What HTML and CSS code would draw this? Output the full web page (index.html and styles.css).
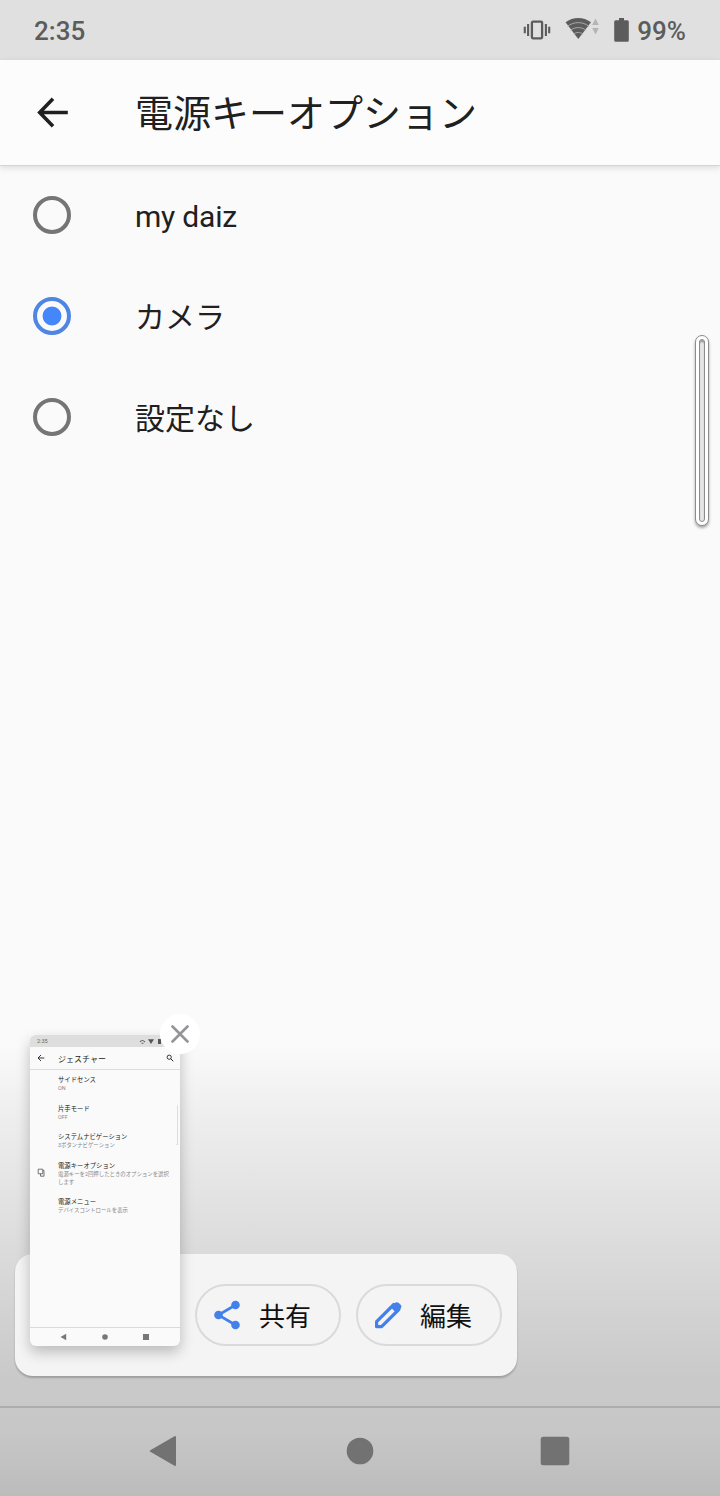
FILE: index.html
```html
<!DOCTYPE html>
<html lang="ja">
<head>
<meta charset="UTF-8">
<title>電源キーオプション</title>
<link rel="stylesheet" href="styles.css">
</head>
<body>

<div class="statusbar">
  <span class="clock">2:35</span>
  <div class="status-icons">
    <svg class="vibrate" width="28" height="22" viewBox="0 0 28 22">
      <rect x="8.9" y="2.7" width="10.2" height="16.6" rx="1" fill="none" stroke="currentColor" stroke-width="2.3"/>
      <path d="M5.1 5v12M22.9 5v12M1.8 7.8v6.4M26.2 7.8v6.4" stroke="currentColor" stroke-width="2.1"/>
    </svg>
    <svg class="wifi" width="36" height="24" viewBox="0 0 36 24">
      <path d="M0.5 5.3C8 -0.6 18.5 -0.6 26 5.3L13.3 22Z" fill="currentColor"/>
      <path d="M2.6 9.3C9 4.4 17.6 4.4 24 9.3M5.6 13.3C10.2 9.7 16.4 9.7 21 13.3M8.6 17.2C11.4 14.9 15.2 14.9 18 17.2" fill="none" stroke="#aaa" stroke-width="1"/>
      <path d="M27.2 8l3.3-6.5L33.8 8zM27.2 11h6.6l-3.3 6.5z" fill="#b4b4b4"/>
    </svg>
    <svg class="battery" width="15" height="24" viewBox="0 0 15 24">
      <path d="M5 0h5v2.2h3.3Q14.8 2.2 14.8 3.7v18.6q0 1.5-1.5 1.5H1.7Q.2 23.8.2 22.3V3.7q0-1.5 1.5-1.5H5z" fill="currentColor"/>
    </svg>
    <span class="percent">99%</span>
  </div>
</div>

<header class="appbar">
  <svg class="back" width="32" height="32" viewBox="0 0 32 32">
    <path d="M16 1.7L2.7 15.5l13.3 13.8M3 15.5h27.8" fill="none" stroke="currentColor" stroke-width="3.6"/>
  </svg>
  <h1>電源キーオプション</h1>
</header>

<main class="options">
  <div class="option"><span class="radio"></span><span class="label latin">my daiz</span></div>
  <div class="option"><span class="radio checked"></span><span class="label">カメラ</span></div>
  <div class="option"><span class="radio"></span><span class="label">設定なし</span></div>
</main>

<!-- edge sense bar -->
<div class="edge-bar"></div>

<!-- screenshot preview -->
<div class="shot">
  <div class="shot-actions">
    <div class="chip">
      <svg width="28" height="30" viewBox="0 0 28 30">
        <path d="M21.5 5L4.4 15l17.1 10" fill="none" stroke="currentColor" stroke-width="2.7"/>
        <circle cx="21.5" cy="5" r="4.3" fill="currentColor"/>
        <circle cx="4.5" cy="15" r="4.3" fill="currentColor"/>
        <circle cx="21.5" cy="25" r="4.3" fill="currentColor"/>
      </svg>
      <span>共有</span>
    </div>
    <div class="chip">
      <svg width="28" height="30" viewBox="0 0 28 30">
        <path d="M1.6 26.7v-5L18.8 4.5l5 5L6.6 26.7z" fill="none" stroke="currentColor" stroke-width="3.2" stroke-linejoin="round"/>
        <path d="M15.6 7.2l4-4q2.2-2 4.4 0l1.4 1.4q2 2.2 0 4.4l-4 4z" fill="currentColor"/>
      </svg>
      <span>編集</span>
    </div>
  </div>

  <div class="thumb">
    <div class="thumb-status">
      <span>2:35</span>
      <svg width="26" height="7" viewBox="0 0 26 7">
        <path d="M1 4q2-3 5 0M2.5 5.2h2" fill="none" stroke="#666" stroke-width="1.1"/>
        <path d="M9 1.2h6L12 6z" fill="#555"/>
        <path d="M19 1h3v5h-3z" fill="#555"/>
      </svg>
    </div>
    <div class="thumb-bar">
      <svg width="8" height="8" viewBox="0 0 8 8"><path d="M4 1L1 4l3 3M1 4h6.3" fill="none" stroke="#222" stroke-width=".9"/></svg>
      <span>ジェスチャー</span>
      <svg width="8" height="8" viewBox="0 0 8 8"><circle cx="3.2" cy="3.2" r="2.1" fill="none" stroke="#222" stroke-width=".9"/><path d="M4.8 4.8L7.3 7.3" stroke="#222" stroke-width="1"/></svg>
    </div>
    <div class="thumb-list">
      <div class="row"><b>サイドセンス</b><i>ON</i></div>
      <div class="row"><b>片手モード</b><i>OFF</i></div>
      <div class="row"><b>システムナビゲーション</b><i>3ボタンナビゲーション</i></div>
      <div class="row tall">
        <svg class="row-icon" width="8" height="10" viewBox="0 0 8 10"><path d="M1.2 1.2h4.6v4.6H1.2zM5.8 2.5H7v5.7H3.5V5.8" fill="none" stroke="#666" stroke-width=".9"/></svg>
        <b>電源キーオプション</b><i>電源キーを2回押したときのオプションを選択</i><i>します</i>
      </div>
      <div class="row"><b>電源メニュー</b><i>デバイスコントロールを表示</i></div>
    </div>
    <div class="thumb-nav">
      <svg width="7" height="8" viewBox="0 0 7 8"><path d="M.5 4L6.2.8v6.4z" fill="#777"/></svg>
      <svg width="6" height="6" viewBox="0 0 6 6"><circle cx="3" cy="3" r="2.8" fill="#777"/></svg>
      <svg width="6" height="6" viewBox="0 0 6 6"><path d="M0 0h6v6H0z" fill="#777"/></svg>
    </div>
    <div class="thumb-edge"></div>
  </div>

  <div class="close">
    <svg width="18" height="18" viewBox="0 0 18 18"><path d="M1.5 1.5l15 15M16.5 1.5l-15 15" stroke="#929497" stroke-width="2.6" stroke-linecap="round"/></svg>
  </div>
</div>

<nav class="navbar">
  <svg width="28" height="32" viewBox="0 0 28 32"><path d="M1.8 16L26 2v28z" fill="currentColor" stroke="currentColor" stroke-width="2" stroke-linejoin="round"/></svg>
  <svg width="28" height="28" viewBox="0 0 28 28"><circle cx="14" cy="14" r="13.3" fill="currentColor"/></svg>
  <svg width="30" height="30" viewBox="0 0 30 30"><rect x=".7" y=".7" width="28.6" height="28.6" rx="2.5" fill="currentColor"/></svg>
</nav>

</body>
</html>
```
FILE: styles.css
```css
* {
  box-sizing: border-box;
}
body {
  margin: 0;
  position: relative;
  height: 1496px;
  display: flex;
  flex-direction: column;
  overflow: hidden;
  font-family: Roboto, "Noto Sans CJK JP", sans-serif;
  color: #202020;
  background: linear-gradient(#fafafa 0, #fafafa 1045px, #efefef 1110px, #dedede 1230px, #c9c9c9 1380px, #c7c7c7 1430px, #bcbcbc 1496px);
}
svg {
  display: block;
  flex: none;
}

/* status bar */
.statusbar {
  height: 60px;
  padding: 2px 34px 0;
  display: flex;
  align-items: center;
  justify-content: space-between;
  background: #e0e0e0;
  color: #5c5c5c;
  font-size: 26px;
  font-weight: 500;
}
.status-icons {
  display: flex;
  align-items: center;
}
.vibrate {
  margin: -3px 14px 0 0;
}
.wifi {
  margin: -4px 13px 0 0;
}
.battery {
  margin: -3px 8px 0 0;
}

/* title */
.appbar {
  height: 106px;
  display: flex;
  align-items: center;
  padding-left: 37px;
  background: #fcfcfc;
  border-bottom: 1px solid #d4d4d4;
  box-shadow: 0 2px 6px rgba(0, 0, 0, 0.12);
}
.back {
  color: #202020;
}
h1 {
  margin: 3px 0 0 66px;
  font-size: 38px;
  line-height: 56px;
  font-weight: 400;
}

/* radio list */
.options {
  flex: 1;
}
.option {
  height: 101px;
  padding-left: 33px;
  display: flex;
  align-items: center;
  font-size: 30px;
}
.radio {
  width: 38px;
  height: 38px;
  margin: -4px 64px 0 0;
  border: 4px solid #757575;
  border-radius: 50%;
}
.radio.checked {
  border-color: #4f86e4;
  background: radial-gradient(circle, #4387fa 9px, transparent 9.8px);
}
.label {
  margin-top: -5px;
}
.label.latin {
  margin-top: -1px;
  letter-spacing: -0.2px;
}

.edge-bar {
  position: absolute;
  left: 695px;
  top: 335px;
  width: 14px;
  height: 191px;
  border: 1px solid #8c8c8c;
  border-radius: 7px;
  background: #fff;
  box-shadow: 0 2px 3px rgba(0, 0, 0, 0.35);
}
.edge-bar::before {
  content: "";
  position: absolute;
  inset: 3px;
  border: 1px solid #8c8c8c;
  border-radius: 3px;
  background: #e6e6e6;
  box-shadow: inset 0 2px 1px #999;
}

/* floating screenshot preview */
.shot {
  position: absolute;
  left: 15px;
  bottom: 120px;
  width: 502px;
}
.shot-actions {
  height: 122px;
  padding: 0 15px;
  display: flex;
  align-items: center;
  justify-content: flex-end;
  gap: 15px;
  background: #f4f4f4;
  border-radius: 18px;
  box-shadow: 0 2px 2px rgba(0, 0, 0, 0.22);
}
.chip {
  width: 146px;
  height: 62px;
  padding-left: 17px;
  display: flex;
  align-items: center;
  gap: 17px;
  border: 2px solid #dadada;
  border-radius: 31px;
  font-size: 26px;
  color: #111;
}
.chip svg {
  color: #4480ea;
}
.chip span {
  margin-top: -2px;
}
.thumb {
  position: absolute;
  left: 15px;
  bottom: 30px;
  width: 150px;
  height: 311px;
  display: flex;
  flex-direction: column;
  overflow: hidden;
  border-radius: 6px;
  background: #fafafa;
  box-shadow: 0 6px 14px rgba(0, 0, 0, 0.24);
  line-height: 1;
}
.thumb-status {
  height: 12px;
  padding: 1px 15px 0 7px;
  display: flex;
  align-items: center;
  justify-content: space-between;
  background: #dedede;
  color: #666;
  font-size: 5.5px;
}
.thumb-bar {
  height: 23px;
  padding: 0 6px 0 7px;
  display: flex;
  align-items: center;
  border-bottom: 1px solid #dcdcdc;
  font-size: 8px;
}
.thumb-bar span {
  flex: 1;
  margin: 3px 0 0 13px;
}
.thumb-list {
  flex: 1;
  padding: 7px 0 0 28px;
}
.row {
  position: relative;
  height: 28.5px;
  white-space: nowrap;
}
.row.tall {
  height: 36px;
}
.row b,
.row i {
  display: block;
  font-weight: 400;
  font-style: normal;
}
.row b {
  font-size: 6.35px;
  line-height: 7px;
}
.row i {
  font-size: 5.4px;
  line-height: 8px;
  color: #888;
}
.row-icon {
  position: absolute;
  left: -21px;
  top: 5px;
}
.thumb-nav {
  height: 19px;
  padding: 0 31px 0 30px;
  display: flex;
  align-items: center;
  justify-content: space-between;
  border-top: 1px solid #dadada;
}
.thumb-edge {
  position: absolute;
  right: 2px;
  top: 70px;
  width: 2px;
  height: 40px;
  border-right: 1px solid #ddd;
  border-bottom: 1px solid #ddd;
  border-radius: 2px;
}
.close {
  position: absolute;
  left: 145px;
  bottom: 322px;
  width: 40px;
  height: 40px;
  display: flex;
  align-items: center;
  justify-content: center;
  border-radius: 50%;
  background: #fff;
}

/* system navigation */
.navbar {
  height: 90px;
  padding: 0 150px 2px 149px;
  display: flex;
  align-items: center;
  justify-content: space-between;
  border-top: 2px solid #adadad;
  color: #727272;
}
.navbar svg:nth-child(2) {
  margin-left: 3px;
}
```
